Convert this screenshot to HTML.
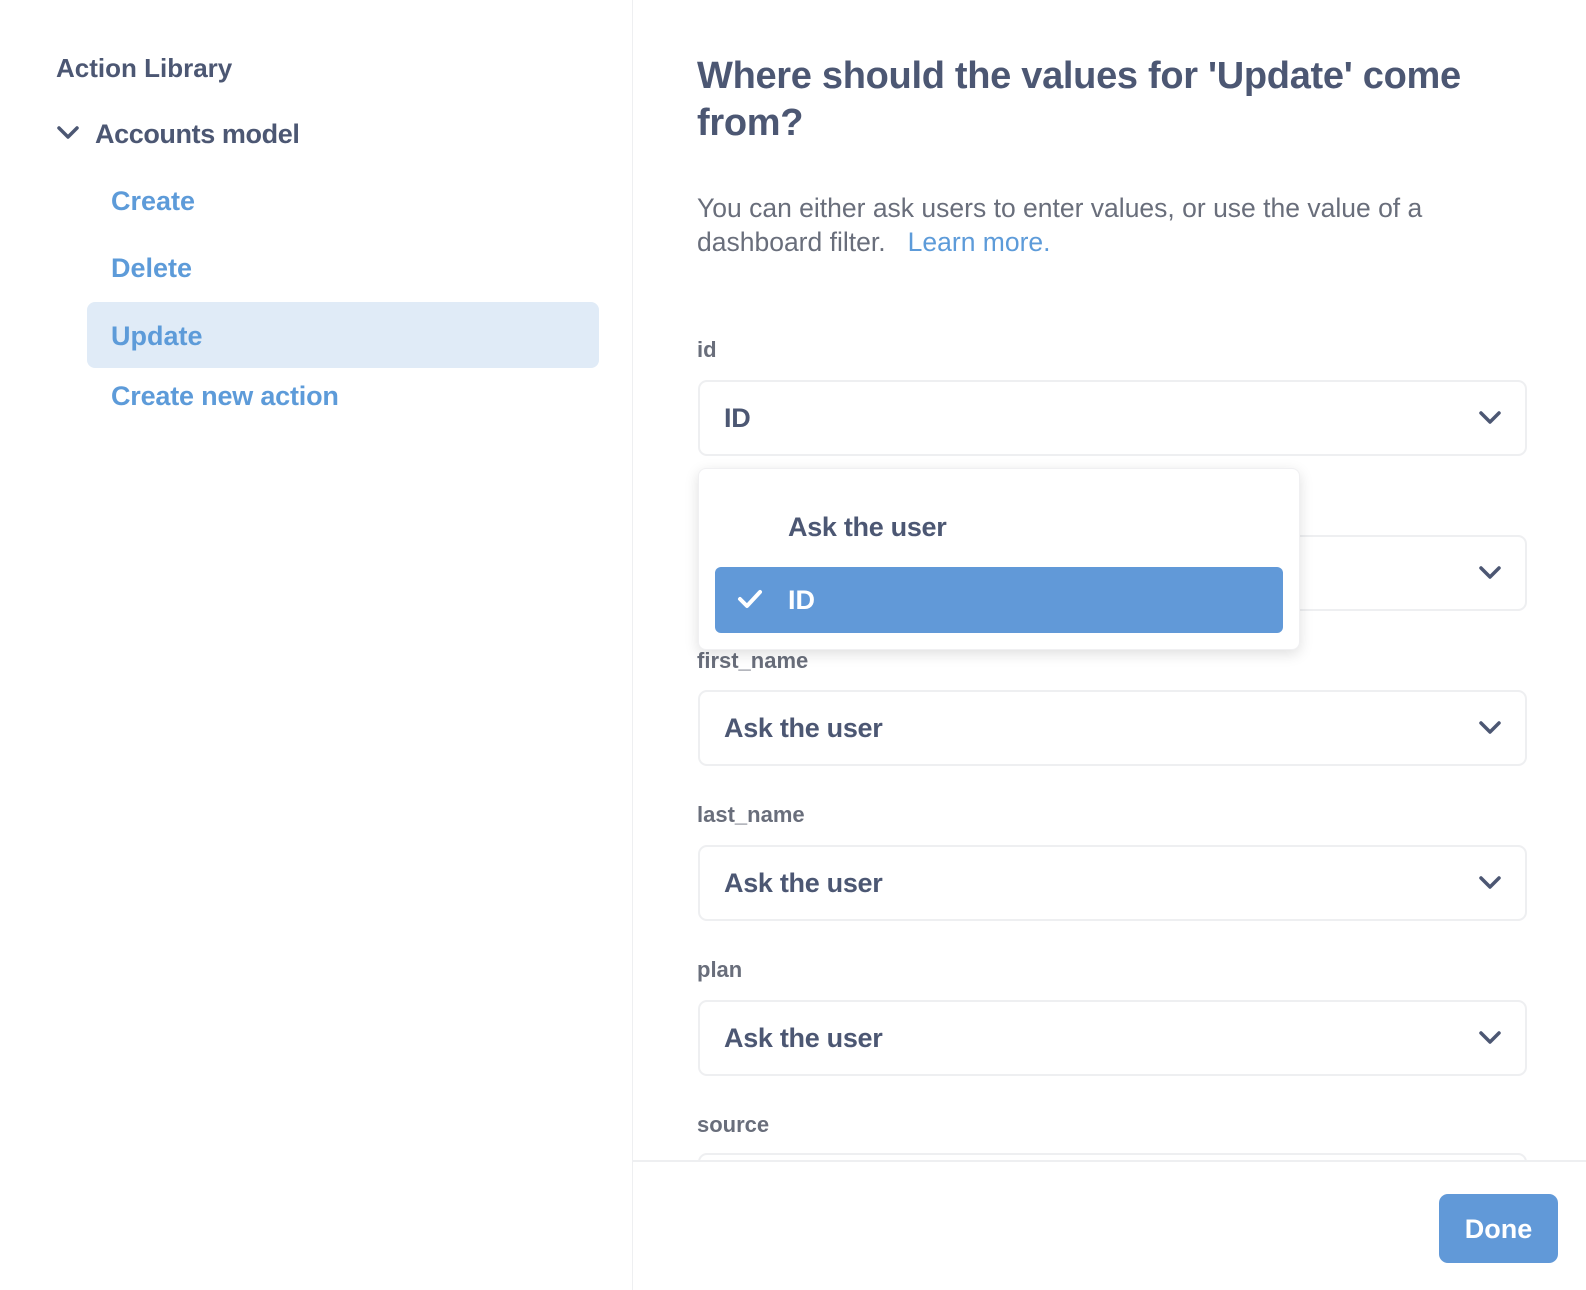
<!DOCTYPE html>
<html><head><style>
*{margin:0;padding:0;box-sizing:border-box}
body{width:1586px;height:1290px;background:#fff;font-family:"Liberation Sans",sans-serif;position:relative;overflow:hidden;color:#4c5773}
.a{position:absolute;white-space:nowrap}
.side{position:absolute;left:632px;top:0;width:1px;height:1290px;background:#eeeff1}
.lnk{color:#5d9bd9;font-size:27px;font-weight:bold}
.lbl{font-size:22px;color:#696e7b;font-weight:bold}
.sel{position:absolute;left:698px;width:829px;height:76px;border:2px solid #eeeff1;border-radius:9px;background:#fff}
.sel span{position:absolute;left:24px;top:21px;font-size:27px;font-weight:bold;color:#4c5773;letter-spacing:-0.3px}
.sel svg{position:absolute;right:24px;top:28px}
</style></head><body>
<div class="side"></div>
<div class="a" style="left:56px;top:53px;font-size:26px;font-weight:bold">Action Library</div>
<svg class="a" style="left:56px;top:124px" width="24" height="18" viewBox="0 0 24 18"><path d="M3 4l9 9 9-9" fill="none" stroke="#4c5773" stroke-width="3.5" stroke-linecap="round" stroke-linejoin="round"/></svg>
<div class="a" style="left:95px;top:119px;font-size:27px;font-weight:bold;letter-spacing:-0.4px">Accounts model</div>
<div class="a lnk" style="left:111px;top:186px">Create</div>
<div class="a lnk" style="left:111px;top:253px">Delete</div>
<div class="a" style="left:87px;top:302px;width:512px;height:66px;background:#e0ebf7;border-radius:8px"></div>
<div class="a lnk" style="left:111px;top:321px">Update</div>
<div class="a lnk" style="left:111px;top:381px;letter-spacing:-0.2px">Create new action</div>
<div class="a" style="left:697px;top:53px;font-size:38px;font-weight:bold;line-height:47px;white-space:normal;width:800px;letter-spacing:-0.3px">Where should the values for 'Update' come from?</div>
<div class="a" style="left:697px;top:191px;font-size:26.5px;line-height:34px;color:#696e7b;white-space:normal;width:820px">You can either ask users to enter values, or use the value of a dashboard filter.&nbsp;&nbsp; <span style="color:#5d9bd9">Learn more.</span></div>
<div class="a lbl" style="left:697px;top:337px">id</div>
<div class="sel" style="top:380px"><span>ID</span><svg width="22" height="16"><path d="M2 3l9 9 9-9" fill="none" stroke="#4c5773" stroke-width="3.5" stroke-linecap="round" stroke-linejoin="round"/></svg></div>
<div class="sel" style="top:535px"><svg width="22" height="16"><path d="M2 3l9 9 9-9" fill="none" stroke="#4c5773" stroke-width="3.5" stroke-linecap="round" stroke-linejoin="round"/></svg></div>
<div class="a lbl" style="left:697px;top:648px">first_name</div>
<div class="sel" style="top:690px"><span>Ask the user</span><svg width="22" height="16"><path d="M2 3l9 9 9-9" fill="none" stroke="#4c5773" stroke-width="3.5" stroke-linecap="round" stroke-linejoin="round"/></svg></div>
<div class="a lbl" style="left:697px;top:802px">last_name</div>
<div class="sel" style="top:845px"><span>Ask the user</span><svg width="22" height="16"><path d="M2 3l9 9 9-9" fill="none" stroke="#4c5773" stroke-width="3.5" stroke-linecap="round" stroke-linejoin="round"/></svg></div>
<div class="a lbl" style="left:697px;top:957px">plan</div>
<div class="sel" style="top:1000px"><span>Ask the user</span><svg width="22" height="16"><path d="M2 3l9 9 9-9" fill="none" stroke="#4c5773" stroke-width="3.5" stroke-linecap="round" stroke-linejoin="round"/></svg></div>
<div class="a lbl" style="left:697px;top:1112px">source</div>
<div class="sel" style="top:1153px"></div>
<div class="a" style="left:633px;top:1160px;width:953px;height:130px;background:#fff;border-top:2px solid #eeeff1"></div>
<div class="a" style="left:1439px;top:1194px;width:119px;height:69px;background:#6199d8;border-radius:9px;color:#fff;font-size:27px;font-weight:bold;text-align:center;line-height:71px">Done</div>
<div class="a" style="left:698px;top:468px;width:602px;height:182px;background:#fff;border-radius:8px;box-shadow:0 4px 14px rgba(0,0,0,.13);border:1px solid #f0f0f2"></div>
<div class="a" style="left:788px;top:512px;font-size:27px;font-weight:bold;letter-spacing:-0.3px">Ask the user</div>
<div class="a" style="left:715px;top:567px;width:568px;height:66px;background:#6199d8;border-radius:6px"></div>
<svg class="a" style="left:737px;top:588px" width="26" height="22"><path d="M3 11l7 7L23 4" fill="none" stroke="#fff" stroke-width="4" stroke-linecap="round" stroke-linejoin="round"/></svg>
<div class="a" style="left:788px;top:585px;font-size:27px;font-weight:bold;color:#fff">ID</div>
</body></html>
